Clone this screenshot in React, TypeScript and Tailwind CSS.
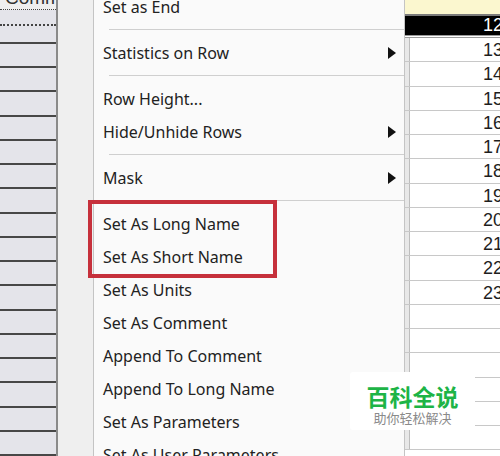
type MenuEntry = { label: string; sub?: boolean } | "sep";

const menu: MenuEntry[] = [
  { label: "Set as End" },
  "sep",
  { label: "Statistics on Row", sub: true },
  "sep",
  { label: "Row Height..." },
  { label: "Hide/Unhide Rows", sub: true },
  "sep",
  { label: "Mask", sub: true },
  "sep",
  { label: "Set As Long Name" },
  { label: "Set As Short Name" },
  { label: "Set As Units" },
  { label: "Set As Comment" },
  { label: "Append To Comment" },
  { label: "Append To Long Name" },
  { label: "Set As Parameters" },
  { label: "Set As User Parameters" },
];

const rowNumbers = [13, 14, 15, 16, 17, 18, 19, 20, 21, 22, 23, null, null, null, null, null, null];

function SubArrow() {
  return (
    <svg width="8" height="12" viewBox="0 0 8 12" className="shrink-0">
      <path d="M0 0 L8 6 L0 12 Z" fill="#111" />
    </svg>
  );
}

// left-hand column of the sheet (row labels)
function LeftColumn() {
  return (
    <div className="flex w-[58px] shrink-0 flex-col border-r-2 border-[#8a8a8a] bg-[#e4e4ea]">
      <div className="h-[15px] overflow-hidden border-b border-dotted border-[#444] bg-[#efefef]">
        <div className="-mt-[11px] whitespace-nowrap pl-[5px] text-[19px] leading-[18px] text-[#333] [font-family:'Liberation_Sans',Arial,sans-serif]">
          Comment
        </div>
      </div>
      <div className="h-[22px] border-b-2 border-dotted border-[#444]" />
      <div className="h-[26px] border-b-2 border-[#474747]" />
      {Array.from({ length: 17 }).map((_, i) => (
        <div key={i} className="h-[24.25px] shrink-0 border-b-2 border-[#474747]" />
      ))}
    </div>
  );
}

function ContextMenu() {
  return (
    <div className="flex w-[312px] shrink-0 flex-col border-r border-l border-[#c4c4c4] bg-[#fafafa] text-[16px] text-[#222] [font-family:'Noto_Sans','Open_Sans',sans-serif]">
      <div className="-mt-[10px] flex flex-col">
        {menu.map((m, i) =>
          m === "sep" ? (
            <div key={i} className="flex h-[13px] shrink-0 items-center pl-[15px]">
              <div className="h-px w-full bg-[#cfcfcf]" />
            </div>
          ) : (
            <div key={i} className="flex h-[33px] shrink-0 items-center justify-between pl-[9px] pr-[8px]">
              <span className="whitespace-nowrap">{m.label}</span>
              {m.sub && <SubArrow />}
            </div>
          )
        )}
      </div>
    </div>
  );
}

function RightGrid() {
  const cell = "flex shrink-0 text-[18px] [font-family:'Liberation_Sans',Arial,sans-serif]";
  return (
    <div className="flex w-[100px] shrink-0 flex-col">
      <div className="flex h-[14px] shrink-0 bg-[#fbf7cf]" />
      <div className="h-[2px] shrink-0 bg-[#7a7a7a]" />
      <div className={`${cell} h-[19px] bg-black leading-[19px] text-white`}>
        <div className="w-[5px]" />
        <div className="flex-1 pr-[2px] text-right">12</div>
      </div>
      <div className="h-[3px] shrink-0 border-y border-[#9a9a9a] bg-white" />
      {rowNumbers.map((n, i) => (
        <div key={i} className={`${cell} h-[24.25px] border-b border-[#c8c8c8] bg-white leading-[24px] text-[#1e1e1e]`}>
          <div className="w-[5px] border-r border-[#bdbdbd] bg-[#e8e8e8]" />
          <div className="flex-1 pr-[2px] text-right">{n}</div>
        </div>
      ))}
    </div>
  );
}

export default function App() {
  return (
    <div className="relative flex h-[456px] w-[500px] overflow-hidden bg-white">
      <LeftColumn />
      <div className="w-[35px] shrink-0 bg-[#efefef]" />
      <ContextMenu />
      <RightGrid />

      {/* red highlight around the two name items */}
      <div className="absolute left-[88px] top-[200px] h-[78px] w-[189px] border-[4px] border-[#c6303b]" />

      {/* watermark */}
      <div className="absolute left-[350px] top-[372px] flex h-[58px] w-[125px] flex-col items-center rounded-[3px] bg-white pt-[11px] [font-family:'Noto_Sans_CJK_SC',sans-serif]">
        <span className="text-[23px] font-bold leading-[26px] text-[#1db446]">百科全说</span>
        <span className="text-[13px] leading-[18px] text-[#8a8a8a]">助你轻松解决</span>
      </div>
    </div>
  );
}
